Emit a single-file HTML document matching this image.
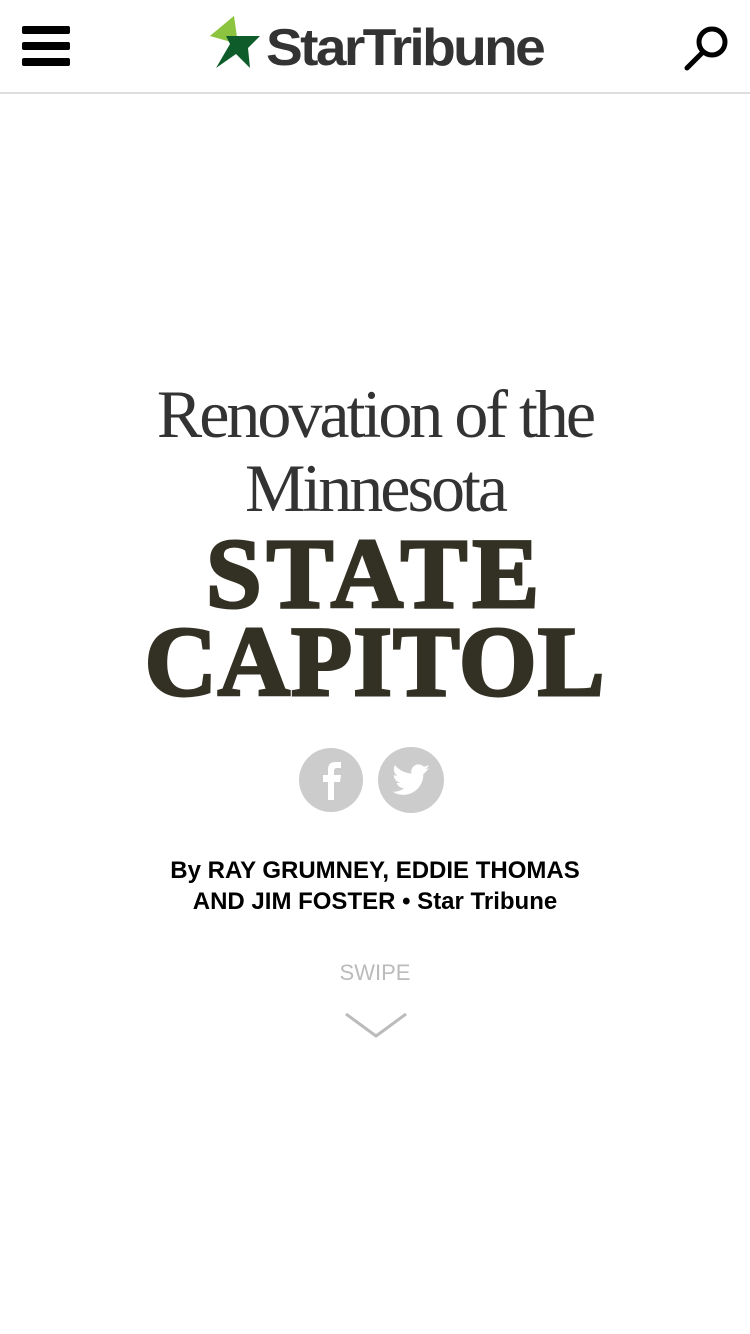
<!DOCTYPE html>
<html><head><meta charset="utf-8"><style>
body{margin:0;width:750px;height:1334px;background:#fff;position:relative;overflow:hidden;font-family:"Liberation Sans",sans-serif}
.hdr{position:absolute;left:0;top:0;width:750px;height:92px;border-bottom:2px solid #ddd}
.bar{position:absolute;left:22px;width:48px;height:8px;background:#000;border-radius:2px}
.logo{position:absolute;left:266px;top:18px;font-weight:bold;font-size:52px;color:#333;letter-spacing:-2.5px;transform:scaleX(1.06);transform-origin:left}
.c{position:absolute;left:0;width:750px;text-align:center}
.thin{font-family:"Liberation Serif",serif;font-weight:normal;font-size:68px;color:#333;letter-spacing:-3px}
.big{font-family:"Liberation Serif",serif;font-weight:bold;font-size:100px;color:#333024;letter-spacing:1px;-webkit-text-stroke:3px #333024}
.by{font-weight:bold;font-size:24px;color:#000}
</style></head><body>
<div class="hdr">
<div class="bar" style="top:26px"></div><div class="bar" style="top:42px"></div><div class="bar" style="top:58px"></div>
<svg style="position:absolute;left:208px;top:16px" width="56" height="54" viewBox="0 0 56 54">
<polygon points="26,0 30,28 2,20" fill="#8cc43f"/>
<polygon points="2,20 26,0 22,24" fill="#8cc43f"/>
<polygon points="18,20 52,20 40,32 42,52 28,38 8,52 22,28" fill="#0d5c2a"/>
</svg>
<div class="logo">StarTribune</div>
<svg style="position:absolute;left:680px;top:22px" width="52" height="52" viewBox="0 0 52 52">
<circle cx="32" cy="20" r="13" fill="none" stroke="#000" stroke-width="5"/>
<line x1="23" y1="30" x2="7" y2="46" stroke="#000" stroke-width="5" stroke-linecap="round"/>
</svg>
</div>
<div class="c thin" style="top:374px;line-height:80px">Renovation of the</div>
<div class="c thin" style="top:448px;line-height:80px">Minnesota</div>
<div class="c big" style="top:524px;line-height:100px;letter-spacing:5px">STATE</div>
<div class="c big" style="top:612px;line-height:100px">CAPITOL</div>
<svg style="position:absolute;left:299px;top:747px" width="148" height="68" viewBox="0 0 148 68">
<circle cx="32" cy="33" r="32" fill="#ccc"/>
<path d="M35 53V35h6l1-7h-7v-4c0-2 1-3 3-3h4v-6h-5c-6 0-8 3-8 8v5h-5v7h5v18z" fill="#fff"/>
<circle cx="112" cy="33" r="33" fill="#ccc"/>
<path d="M131 21c-1.5.7-3 1-4.5 1.2 1.6-1 2.8-2.5 3.4-4.3-1.5.9-3.2 1.500-5 1.900-3.100-3.300-8.400-3.300-11.200.4-1.300 1.700-1.800 4.200-1.200 6.300-6.500-.3-12.500-3.400-16.600-8.400-2.100 3.700-1 8.400 2.500 10.800-1.300 0-2.500-.4-3.600-1 0 3.800 2.700 7.100 6.400 7.800-1.200.3-2.400.4-3.600.1 1 3.200 4 5.400 7.400 5.500-3.300 2.600-7.500 3.800-11.700 3.300 11.600 7.400 27.100 1.700 30.500-12.500.4-1.700.5-3.400.5-5.100 1.600-1.100 2.900-2.500 3.900-4z" fill="#fff"/>
</svg>
<div class="c by" style="top:855px;line-height:31px">By RAY GRUMNEY, EDDIE THOMAS<br>AND JIM FOSTER • Star Tribune</div>
<div class="c" style="top:960px;font-size:22px;color:#bbb">SWIPE</div>
<svg style="position:absolute;left:344px;top:1010px" width="64" height="30" viewBox="0 0 64 30">
<polyline points="2,4 32,26 62,4" fill="none" stroke="#bbb" stroke-width="3"/>
</svg>
</body></html>
